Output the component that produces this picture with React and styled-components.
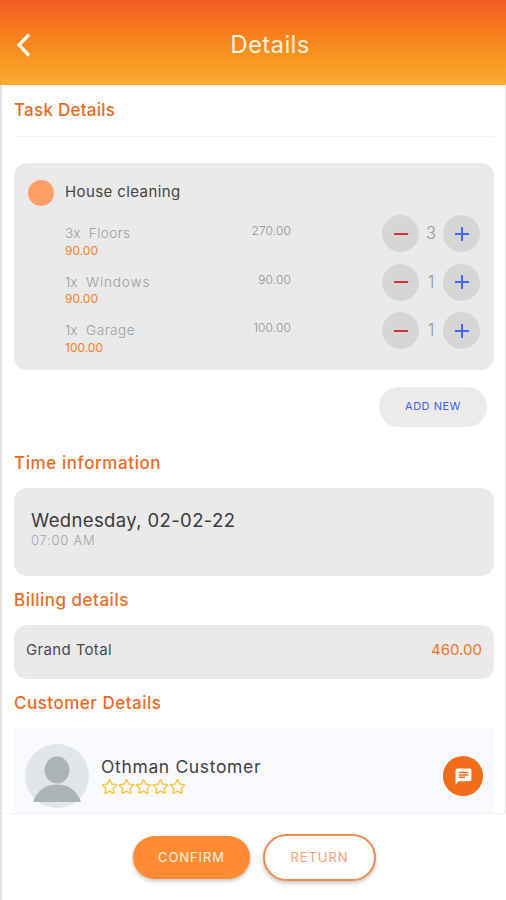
import React, { useState } from 'react'
import styled, { createGlobalStyle } from 'styled-components'
import { MdChat } from 'react-icons/md'
import { FaRegStar } from 'react-icons/fa'

const GlobalStyle = createGlobalStyle`
    * {
        box-sizing: border-box;
    }

    body {
        margin: 0;
        background: #fff;
        font-family: Inter, 'Open Sans', sans-serif;
    }

    button {
        font-family: inherit;
        padding: 0;
        border: none;
        cursor: pointer;
    }
`
const Screen = styled.div`
    display: flex;
    flex-direction: column;
    width: 506px;
    height: 900px;
    overflow: hidden;
`
const Header = styled.header`
    flex: none;
    display: grid;
    grid-template-columns: 48px 1fr 14px;
    align-items: center;
    height: 85px;
    padding-top: 4px;
    background: linear-gradient(#f45a26 0%, #f6761c 30%, #f8941f 66%, #fbac33 100%);
`
const BackButton = styled.button`
    display: flex;
    padding-left: 16px;
    background: none;
`
const PageTitle = styled.h1`
    margin: 0;
    color: #fff1dc;
    font-size: 24px;
    font-weight: 400;
    line-height: 30px;
    letter-spacing: 0.35px;
    text-align: center;
`
const Content = styled.main`
    flex: 1;
    min-height: 0;
    overflow: hidden;
    border: 2px solid #e2e2e4;
    border-width: 0 1px 0 2px;
    padding: 0 11px 0 12px;
`
const Heading = styled.h2`
    margin: 0;
    padding-top: ${props => props.$top}px;
    color: #ee6a1d;
    font-size: 17px;
    font-weight: 500;
    line-height: 24px;
    letter-spacing: ${props => props.$spacing || 0.5}px;
`
const Divider = styled.hr`
    height: 1px;
    margin: 14px 0 26px;
    border: none;
    background: #f1f1f1;
`
const Card = styled.section`
    border-radius: 13px;
    background: #eaeaea;
`
const TaskCard = styled(Card)`
    height: 207px;
    padding: 16px 14px 0 14px;
`
const TaskHeader = styled.div`
    display: flex;
    align-items: center;
    gap: 11px;
    height: 27px;
    margin-bottom: 9px;
`
const Dot = styled.span`
    width: 26px;
    height: 26px;
    border-radius: 50%;
    background: #ff9d66;
`
const TaskName = styled.span`
    padding-bottom: 2px;
    color: #444;
    font-size: 15px;
    letter-spacing: 0.4px;
`
const ItemRow = styled.div`
    display: grid;
    grid-template-columns: 37px 140px 86px 1fr;
    height: 48.6px;
`
const ItemLabel = styled.div`
    grid-column: 2;
    padding-top: 10px;
    color: #9a9da0;
    font-size: 13.5px;
    font-weight: 300;
    line-height: 17.5px;
    letter-spacing: ${props => props.$spacing}px;
`
const ItemCount = styled.span`
    margin-right: 8.5px;
    letter-spacing: 0;
`
const UnitPrice = styled.div`
    color: #fa7d2d;
    font-size: 12px;
    font-weight: 400;
    line-height: 16px;
    letter-spacing: 0;
`
const Amount = styled.div`
    padding-top: 7px;
    color: #8f9295;
    font-size: 12px;
    font-weight: 300;
    line-height: 18px;
    letter-spacing: 0.1px;
    text-align: right;
`
const Stepper = styled.div`
    display: flex;
    justify-content: flex-end;
    height: 37px;
`
const StepButton = styled.button`
    display: flex;
    align-items: center;
    justify-content: center;
    width: 37px;
    height: 37px;
    border-radius: 50%;
    background: #d6d6d6;
    color: ${props => props.$color};
`
const StepValue = styled.span`
    width: 24px;
    color: #999;
    font-size: 17px;
    font-weight: 300;
    line-height: 37px;
    text-align: center;
`
const AddRow = styled.div`
    display: flex;
    justify-content: flex-end;
    padding: 17px 7px 0 0;
`
const AddButton = styled.button`
    width: 108px;
    height: 40px;
    padding-bottom: 2px;
    border-radius: 20px;
    background: #ebebeb;
    color: #3d5df0;
    font-size: 11px;
    letter-spacing: 0.5px;
`
const TimeCard = styled(Card)`
    height: 88px;
    margin-top: 13px;
    padding: 20px 17px 0;
`
const DateText = styled.div`
    color: #3a3a3a;
    font-size: 18.5px;
    line-height: 24px;
    letter-spacing: 0.37px;
`
const TimeText = styled.div`
    color: #a3a3a6;
    font-size: 13px;
    font-weight: 300;
    line-height: 16px;
    letter-spacing: 0.75px;
`
const TotalCard = styled(Card)`
    display: flex;
    justify-content: space-between;
    height: 54px;
    margin-top: 13px;
    padding: 15px 12px 0;
    font-size: 15px;
    line-height: 20px;
`
const TotalLabel = styled.span`
    color: #4a4a4a;
    letter-spacing: 0.35px;
`
const TotalValue = styled.span`
    color: #f0712b;
`
const CustomerCard = styled.section`
    display: flex;
    align-items: center;
    height: 96px;
    margin-top: 13px;
    padding: 0 11px 0 11px;
    background: #f9f9fe;
`
const CustomerInfo = styled.div`
    flex: 1;
    padding: 0 0 2px 12px;
`
const CustomerName = styled.div`
    color: #3f3f44;
    font-size: 17.5px;
    line-height: 22px;
    letter-spacing: 0.65px;
`
const Stars = styled.div`
    display: flex;
    color: #fcc640;
`
const ChatButton = styled.button`
    display: flex;
    align-items: center;
    justify-content: center;
    width: 40px;
    height: 40px;
    border-radius: 50%;
    background: #f26d1a;
    color: #fff;
`
const Footer = styled.footer`
    flex: none;
    display: flex;
    align-items: center;
    justify-content: center;
    gap: 13px;
    height: 87px;
    border-top: 1px solid #f1f1f3;
    border-left: 2px solid #e2e2e4;
`
const FooterButton = styled.button`
    width: ${props => (props.$outline ? 113 : 117)}px;
    height: ${props => (props.$outline ? 47 : 43)}px;
    padding-left: 1px;
    border: ${props => (props.$outline ? '2px solid #ee8c50' : 'none')};
    border-radius: 24px;
    background: ${props => (props.$outline ? '#fff' : '#ff8c32')};
    color: ${props => (props.$outline ? '#f5a071' : '#fff0e2')};
    font-size: 13px;
    font-weight: 400;
    letter-spacing: 0.9px;
    box-shadow: 0 2px 4px rgba(0, 0, 0, 0.25);
`

const items = [
    { name: 'Floors', price: 90, count: 3, spacing: 0.45 },
    { name: 'Windows', price: 90, count: 1, spacing: 0.9 },
    { name: 'Garage', price: 100, count: 1, spacing: 0.6 }
]

const BackIcon = () => (
    <svg width='16' height='26' viewBox='0 0 16 26' fill='none' stroke='#fff6e8' strokeWidth='3.3'>
        <path d='M13 2.5L3 13L13 23.5' />
    </svg>
)

const StepIcon = ({ plus }) => (
    <svg width='16' height='16' viewBox='0 0 16 16' stroke='currentColor' strokeWidth='2'>
        <path d={plus ? 'M1 8H15M8 1V15' : 'M1 8H15'} />
    </svg>
)

const Avatar = () => (
    <svg width='64' height='64' viewBox='0 0 64 64'>
        <circle cx='32' cy='32' r='32' fill='#e2e6e8' />
        <ellipse cx='32' cy='26' rx='12.5' ry='13.5' fill='#adb4b6' />
        <path d='M8 58C12 46 21 40.500 32 40.500S52 46 56 58Z' fill='#adb4b6' />
    </svg>
)

const Item = ({ item, onChange }) => (
    <ItemRow>
        <ItemLabel $spacing={item.spacing}>
            <ItemCount>{item.count}x</ItemCount>{item.name}
            <UnitPrice>{item.price.toFixed(2)}</UnitPrice>
        </ItemLabel>
        <Amount>{(item.price * item.count).toFixed(2)}</Amount>
        <Stepper>
            <StepButton $color='#d32f3a' onClick={() => onChange(-1)}><StepIcon /></StepButton>
            <StepValue>{item.count}</StepValue>
            <StepButton $color='#4169f5' onClick={() => onChange(1)}><StepIcon plus /></StepButton>
        </Stepper>
    </ItemRow>
)

const App = () => {
    const [list, setList] = useState(items)

    const changeCount = (index, step) => {
        setList(list.map((item, i) => i === index ? { ...item, count: Math.max(0, item.count + step) } : item))
    }

    const total = list.reduce((sum, item) => sum + item.price * item.count, 0)

    return (
        <Screen>
            <GlobalStyle />
            <Header>
                <BackButton><BackIcon /></BackButton>
                <PageTitle>Details</PageTitle>
            </Header>
            <Content>
                <Heading $top={13} $spacing={0.25}>Task Details</Heading>
                <Divider />
                <TaskCard>
                    <TaskHeader>
                        <Dot />
                        <TaskName>House cleaning</TaskName>
                    </TaskHeader>
                    {list.map((item, i) => (
                        <Item key={item.name} item={item} onChange={step => changeCount(i, step)} />
                    ))}
                </TaskCard>
                <AddRow>
                    <AddButton>ADD NEW</AddButton>
                </AddRow>
                <Heading $top={24} $spacing={0.58}>Time information</Heading>
                <TimeCard>
                    <DateText>Wednesday, 02-02-22</DateText>
                    <TimeText>07:00 AM</TimeText>
                </TimeCard>
                <Heading $top={12}>Billing details</Heading>
                <TotalCard>
                    <TotalLabel>Grand Total</TotalLabel>
                    <TotalValue>{total.toFixed(2)}</TotalValue>
                </TotalCard>
                <Heading $top={12}>Customer Details</Heading>
                <CustomerCard>
                    <Avatar />
                    <CustomerInfo>
                        <CustomerName>Othman Customer</CustomerName>
                        <Stars>
                            {[1, 2, 3, 4, 5].map(n => <FaRegStar key={n} size={17} />)}
                        </Stars>
                    </CustomerInfo>
                    <ChatButton><MdChat size={19} /></ChatButton>
                </CustomerCard>
            </Content>
            <Footer>
                <FooterButton>CONFIRM</FooterButton>
                <FooterButton $outline>RETURN</FooterButton>
            </Footer>
        </Screen>
    )
}

export default App
